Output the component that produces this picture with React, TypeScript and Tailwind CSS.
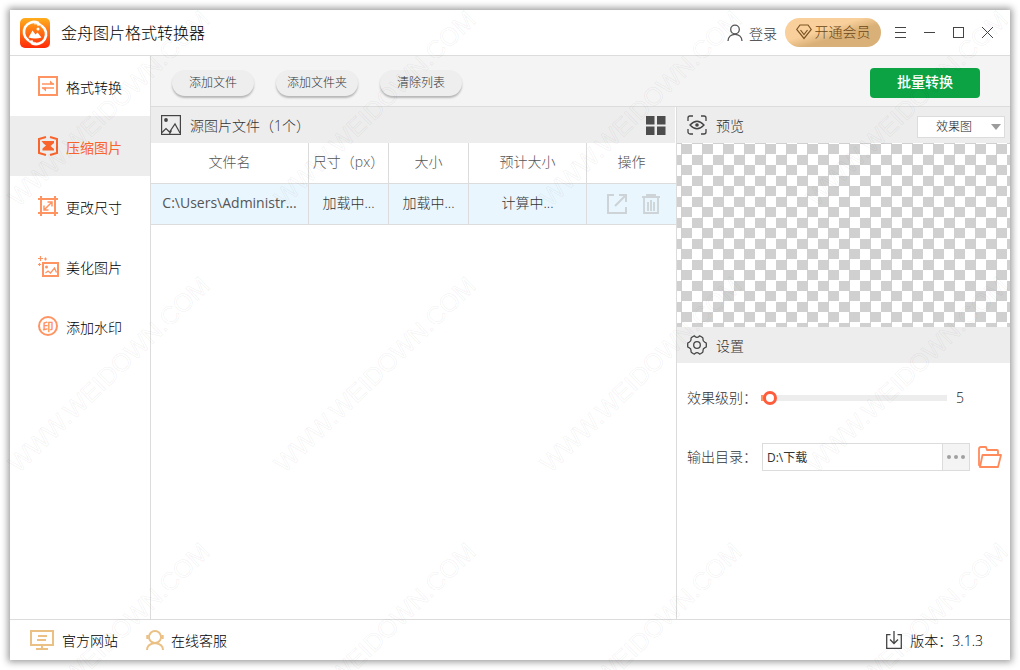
import { useState } from "react";
import type { ReactNode } from "react";

const navItems = [
  { id: "convert", label: "格式转换" },
  { id: "compress", label: "压缩图片" },
  { id: "resize", label: "更改尺寸" },
  { id: "beautify", label: "美化图片" },
  { id: "watermark", label: "添加水印" },
];

const columns = [
  { label: "文件名", width: "w-[158px]" },
  { label: "尺寸（px）", width: "w-20" },
  { label: "大小", width: "w-20" },
  { label: "预计大小", width: "w-[118px]" },
  { label: "操作", width: "w-auto" },
];

const files = [{ name: "C:\\Users\\Administr...", dimensions: "加载中...", size: "加载中...", estimate: "计算中..." }];

function NavIcon({ id }: { id: string }) {
  if (id === "watermark") {
    return (
      <span className="flex h-5 w-5 items-center justify-center rounded-full border-2 border-[#ff9463] text-[11px] leading-none font-bold text-[#ff9463]">
        印
      </span>
    );
  }
  return (
    <svg className="h-5 w-5 overflow-visible" viewBox="0 0 20 20" fill="none" stroke="#ff9463" strokeWidth="2">
      {id === "convert" && (
        <>
          <rect x="1" y="1" width="18" height="18" />
          <path d="M4 8h12M4 12h12" strokeWidth="1.400" />
          <path d="M12 4.500l4.500 4h-4.500zM8 15.500v-4H3.500z" fill="#ff9463" stroke="none" />
        </>
      )}
      {id === "compress" && (
        <g stroke="#f8642b">
          <path d="M8 1L1 3v14l7 2M12 1l7 2v14l-7 2" />
          <path d="M3.500 5H16v2l-3.500 3 3.500 3v1.500H4.500V12.500L8 9.500 5.500 7.500z" fill="#f8642b" stroke="none" />
        </g>
      )}
      {id === "resize" && (
        <>
          <path d="M0 3h20M0 17h20M3 0v20M17 0v20" />
          <path d="M6.500 13.500l7-7M9.500 6H14v4.500M6 9.500V14h4.500" strokeWidth="1.500" />
        </>
      )}
      {id === "beautify" && (
        <>
          <rect x="5" y="7" width="15" height="13" />
          <path d="M7.500 17l2.500-2 2.500 2 4-5 2 4.500" strokeWidth="1.300" />
          <circle cx="8.500" cy="11" r="1.500" fill="#ff9463" stroke="none" />
          <path d="M2.500 0v5M0 2.500h5M7.500 1.500v3M6 3h3M1.500 7v3M0 8.500h3" strokeWidth="1.200" />
        </>
      )}
    </svg>
  );
}

function WindowButton({ label, children }: { label: string; children: ReactNode }) {
  return (
    <button aria-label={label} className="flex h-7 w-[29px] items-center justify-center">
      <svg className="h-[13px] w-[13px]" viewBox="0 0 13 13" fill="none" stroke="#444">
        {children}
      </svg>
    </button>
  );
}

function TitleBar() {
  return (
    <header className="flex h-[46px] shrink-0 items-center border-b border-[#dcdcdc] pr-2 pl-2.5">
      <svg className="h-[30px] w-[30px]" viewBox="0 0 30 30">
        <defs>
          <linearGradient id="logo" x1="0" y1="0" x2="0" y2="1">
            <stop offset="0" stopColor="#ffae1c" />
            <stop offset="1" stopColor="#ff2a08" />
          </linearGradient>
        </defs>
        <rect width="30" height="30" rx="5" fill="url(#logo)" />
        <path d="M8 22A10 10 0 0 1 18 4.800M22 8A10 10 0 0 1 12 25.200" fill="none" stroke="#fff" strokeWidth="2.600" strokeLinecap="round" />
        <path d="M22 8A10 10 0 0 0 14 5.500M8 22a10 10 0 0 0 8 3" fill="none" stroke="#fff" strokeWidth="2" opacity=".6" />
        <path d="M16.500 3.200l5.500 3.300-4.500 1.500zM13.500 27l-5.500-3.500 4.500-1.500z" fill="#fff" />
        <path d="M8.500 19.500l4-7 3 4 2-2 4 5q-6.500 2-13 0z" fill="#fff" />
        <circle cx="18" cy="11" r="1.500" fill="#fff" />
      </svg>
      <h1 className="ml-[11px] text-base font-light text-black">金舟图片格式转换器</h1>
      <button className="ml-auto flex items-center gap-1.5 text-sm text-[#333]">
        <svg className="h-[18px] w-4" viewBox="0 0 16 18" fill="none" stroke="#555" strokeWidth="1.300">
          <circle cx="8" cy="5.500" r="4.300" />
          <path d="M1 17c0-4 3-6.700 7-6.700s7 2.700 7 6.700" />
        </svg>
        <span className="pt-0.5">登录</span>
      </button>
      <button className="mr-[5px] ml-2 flex h-[29px] w-24 items-center justify-center gap-[3px] rounded-full bg-linear-to-br from-[#f9d09b] from-40% to-[#d9b077] to-60% pb-0.5 text-sm text-[#6b4615]">
        <svg className="h-4 w-4" viewBox="0 0 16 16" fill="none" stroke="#7a5423" strokeWidth="1.200">
          <path d="M4 1h8l3.300 4.500L8 14.500.7 5.500z" />
          <path d="M4.500 6L8 10.500 11.500 6" />
        </svg>
        开通会员
      </button>
      <WindowButton label="菜单">
        <path d="M1 1.500h11M1 6.500h11M1 11.500h11" />
      </WindowButton>
      <WindowButton label="最小化">
        <path d="M1 6.500h11" />
      </WindowButton>
      <WindowButton label="最大化">
        <rect x="1.500" y="1.500" width="10" height="10" />
      </WindowButton>
      <WindowButton label="关闭">
        <path d="M1 1l11 11M12 1L1 12" />
      </WindowButton>
    </header>
  );
}

function PanelHeader({ icon, title, children }: { icon: ReactNode; title: string; children?: ReactNode }) {
  return (
    <div className="flex h-9 items-center bg-[#ededed] pr-[5px] pl-2.5">
      {icon}
      <h2 className="ml-[9px] pt-0.5 text-sm text-[#333]">{title}</h2>
      <div className="ml-auto">{children}</div>
    </div>
  );
}

function FilePanel() {
  return (
    <section className="min-w-0 flex-1">
      <div className="mr-px">
        <PanelHeader
          title="源图片文件（1个）"
          icon={
            <svg className="h-5 w-5" viewBox="0 0 20 20" fill="none" stroke="#444" strokeWidth="1.200">
              <rect x="0.600" y="0.600" width="18.800" height="18.800" />
              <circle cx="5" cy="5" r="1.900" fill="#444" stroke="none" />
              <path d="M1 17.500l4-4 3.500 3.500L14 9l5 9M8.500 19l2-3.500" />
            </svg>
          }
        >
          <button aria-label="缩略图视图" className="mr-1 block">
            <svg className="h-5 w-5" viewBox="0 0 20 20" fill="#4d4d4d">
              <path d="M0 1h8.500v8.500H0zM11 1h8.500v8.500H11zM0 11.500h8.500V20H0zM11 11.500h8.500V20H11z" />
            </svg>
          </button>
        </PanelHeader>
      </div>
      <table className="w-full table-fixed border-separate border-spacing-0 text-center text-sm">
        <thead>
          <tr>
            {columns.map((col) => (
              <th
                key={col.label}
                className={`${col.width} h-[41px] border-r border-b border-[#dcdcdc] p-0 pb-0.5 font-light whitespace-nowrap text-[#555] last:border-r-0`}
              >
                {col.label}
              </th>
            ))}
          </tr>
        </thead>
        <tbody className="text-[#333]">
          {files.map((file) => (
            <tr key={file.name} className="bg-[#e9f6fe]">
              <td className="h-[41px] border-r border-b border-[#dcdcdc] p-0 pb-0.5 font-normal whitespace-nowrap text-[#555]">{file.name}</td>
              <td className="border-r border-b border-[#dcdcdc] p-0 pb-0.5">{file.dimensions}</td>
              <td className="border-r border-b border-[#dcdcdc] p-0 pb-0.5">{file.size}</td>
              <td className="border-r border-b border-[#dcdcdc] p-0 pb-0.5">{file.estimate}</td>
              <td className="border-b border-[#dcdcdc] p-0">
                <div className="flex items-center justify-center gap-[15px] pl-1">
                  <button aria-label="打开文件">
                    <svg className="block h-5 w-5" viewBox="0 0 20 20" fill="none" stroke="#cdd3d6" strokeWidth="2">
                      <path d="M7 1H1v18h18v-6M8 12L18 2M12 1h7v7" />
                    </svg>
                  </button>
                  <button aria-label="删除">
                    <svg className="block h-5 w-[18px]" viewBox="0 0 18 20" fill="none" stroke="#cdd3d6" strokeWidth="1.800">
                      <path d="M0 3h18M5 3V1h8v2M2 3v16h14V3M6 8v9M9 6v11M12 8v9" />
                    </svg>
                  </button>
                </div>
              </td>
            </tr>
          ))}
        </tbody>
      </table>
    </section>
  );
}

function SidePanel() {
  const [level, setLevel] = useState(5);
  const [mode, setMode] = useState("效果图");
  const [dir, setDir] = useState("D:\\下载");
  const min = 4;
  const max = 100;
  const filled = ((level - min) / (max - min)) * 100;

  return (
    <section className="w-[334px] shrink-0 border-l border-[#dcdcdc]">
      <PanelHeader
        title="预览"
        icon={
          <svg className="h-5 w-5" viewBox="0 0 20 20" fill="none" stroke="#444" strokeWidth="1.300">
            <path d="M6 1H3a2 2 0 0 0-2 2v3M14 1h3a2 2 0 0 1 2 2v3M6 19H3a2 2 0 0 1-2-2v-3M14 19h3a2 2 0 0 0 2-2v-3" />
            <path d="M3 10Q10 2.500 17 10 10 17.500 3 10z" />
            <circle cx="10" cy="10" r="1.800" fill="#444" stroke="none" />
          </svg>
        }
      >
        <div className="relative mt-1">
          <select
            aria-label="预览模式"
            value={mode}
            onChange={(e) => setMode(e.target.value)}
            className="block h-[22px] w-[88px] appearance-none border border-[#dcdcdc] bg-white pl-[18px] text-xs text-[#222]"
          >
            <option>效果图</option>
            <option>原图</option>
          </select>
          <svg className="pointer-events-none absolute top-2 right-1 h-1.5 w-2.5" viewBox="0 0 10 6" fill="#9c9c9c">
            <path d="M0 0h10L5 6z" />
          </svg>
        </div>
      </PanelHeader>
      <div className="h-[184px] bg-[conic-gradient(#d0d0d0_25%,#fff_0_50%,#d0d0d0_0_75%,#fff_0)] bg-size-[21px_21px] bg-position-[-6px_1px]" />
      <PanelHeader
        title="设置"
        icon={
          <svg className="h-5 w-5" viewBox="0 0 20 20" fill="none" stroke="#444" strokeWidth="1.300" strokeLinejoin="round">
            <path d="M6.500 1.200Q7.500.6 8 1.600q2 1.600 4 0 .5-1 1.500-.4l2 1.300q.8.500.4 1.500-.1 2.500 2.100 3.400 1.300.1 1.300 1.100v3q0 1-1.300 1.100-2.200.9-2.100 3.400.4 1-.4 1.500l-2 1.300q-1 .6-1.500-.4-2-1.600-4 0-.5 1-1.500.4l-2-1.300q-.8-.5-.4-1.500.1-2.500-2.100-3.400Q.7 12.500.7 11.500v-3q0-1 1.300-1.100 2.200-.9 2.100-3.400-.4-1 .4-1.500z" />
            <circle cx="10" cy="10" r="3.300" />
          </svg>
        }
      />
      <div className="pr-2 pl-2.5">
        <div className="mt-[21px] flex h-7 items-center">
          <label htmlFor="level" className="w-[74px] text-sm whitespace-nowrap text-[#333]">
            效果级别：
          </label>
          <input
            id="level"
            type="range"
            min={min}
            max={max}
            value={level}
            onChange={(e) => setLevel(Number(e.target.value))}
            className="h-1.5 w-[186px] appearance-none [&::-webkit-slider-thumb]:h-3.5 [&::-webkit-slider-thumb]:w-3.5 [&::-webkit-slider-thumb]:appearance-none [&::-webkit-slider-thumb]:rounded-full [&::-webkit-slider-thumb]:border-3 [&::-webkit-slider-thumb]:border-[#ff5c3c] [&::-webkit-slider-thumb]:bg-white"
            style={{ background: `linear-gradient(to right, #ff9463 calc(${filled}% + 4px), #ededed 0)` }}
          />
          <output htmlFor="level" className="ml-[9px] text-sm text-[#222]">
            {level}
          </output>
        </div>
        <div className="mt-[31px] flex h-7 items-center">
          <label htmlFor="dir" className="w-[75px] text-sm whitespace-nowrap text-[#333]">
            输出目录：
          </label>
          <input
            id="dir"
            value={dir}
            onChange={(e) => setDir(e.target.value)}
            className="h-7 w-[180px] border border-r-0 border-[#dcdcdc] px-1 text-xs font-normal text-[#333]"
          />
          <button aria-label="浏览" className="flex h-7 w-7 items-center justify-center gap-[3px] border border-[#dcdcdc] bg-[#f4f4f4]">
            <span className="h-1 w-1 rounded-full bg-[#a0a0a0]" />
            <span className="h-1 w-1 rounded-full bg-[#a0a0a0]" />
            <span className="h-1 w-1 rounded-full bg-[#a0a0a0]" />
          </button>
          <button aria-label="打开目录" className="ml-2">
            <svg className="block h-[22px] w-6" viewBox="0 0 24 22" fill="none" stroke="#ff8a5c" strokeWidth="1.800" strokeLinejoin="round">
              <path d="M2 20.500L1 19V3q0-2 2-2h5l1 3h10q1 0 1 1v4" />
              <path d="M4.500 9H23l-3 12H2z" />
            </svg>
          </button>
        </div>
      </div>
    </section>
  );
}

function Footer() {
  return (
    <footer className="flex h-[41px] shrink-0 items-center border-t border-[#dcdcdc] pr-[27px] pl-5 text-sm text-black">
      <a href="#site" className="flex items-center gap-2">
        <svg className="h-5 w-6" viewBox="0 0 24 20" fill="none" stroke="#ebc084" strokeWidth="2">
          <path d="M1 1h22v14H1zM12 15v4M6 19h12M8 6h9M7 10h9" />
        </svg>
        <span className="pt-0.5">官方网站</span>
      </a>
      <a href="#support" className="ml-7 flex items-center gap-[7px]">
        <svg className="h-5 w-[18px]" viewBox="0 0 18 20" fill="none" stroke="#ebc084" strokeWidth="1.900">
          <circle cx="9" cy="7" r="6" />
          <path d="M1 20q0-6 8-7 8 1 8 7" />
          <path d="M1.500 5v4M16.500 5v4" strokeWidth="2.400" />
        </svg>
        <span className="pt-0.5">在线客服</span>
      </a>
      <div className="ml-auto flex items-center gap-2">
        <svg className="h-[18px] w-4" viewBox="0 0 16 18" fill="none" stroke="#444" strokeWidth="1.300">
          <path d="M4.500 3.600H.7v13.700h14.600V3.600h-3.800M8 0v12.500M4 8.500l4 4 4-4" />
        </svg>
        <span className="pt-0.5">版本：3.1.3</span>
      </div>
    </footer>
  );
}

function Watermark() {
  return (
    <div aria-hidden="true" className="pointer-events-none absolute inset-0 overflow-hidden">
      <div className="-mt-[25px] -ml-6 grid w-max grid-cols-[repeat(4,266px)] auto-rows-[266px]">
        {Array.from({ length: 12 }, (_, i) => (
          <span key={i} className="flex items-center justify-center">
            <span className="-rotate-[44deg] font-[Liberation_Sans] text-[25px] leading-none text-transparent [-webkit-text-stroke:1px_rgba(0,0,0,0.05)]">
              WWW.WEIDOWN.COM
            </span>
          </span>
        ))}
      </div>
    </div>
  );
}

export default function App() {
  const [active, setActive] = useState("compress");

  return (
    <div className="relative flex min-h-screen bg-white p-2.5 font-['Open_Sans','Noto_Sans_CJK_SC',sans-serif] font-light">
      <div className="flex min-w-0 flex-1 flex-col bg-white shadow-[0_0_7px_2px_rgba(0,0,0,0.4)]">
        <TitleBar />
        <div className="flex flex-1">
          <nav className="w-[141px] shrink-0 border-r border-[#dcdcdc]">
            {navItems.map((item) => (
              <button
                key={item.id}
                onClick={() => setActive(item.id)}
                className={`flex h-[60px] w-full items-center gap-2 pl-7 text-sm ${active === item.id ? "bg-[#ededed] font-normal text-[#f8642b]" : "text-black"}`}
              >
                <NavIcon id={item.id} />
                <span className="pt-[3px]">{item.label}</span>
              </button>
            ))}
          </nav>
          <main className="flex min-w-0 flex-1 flex-col">
            <div className="flex h-[51px] items-center gap-[22px] border-b border-[#dcdcdc] bg-[#f4f4f4] pt-[3px] pr-[30px] pl-[21px]">
              {["添加文件", "添加文件夹", "清除列表"].map((label) => (
                <button key={label} className="h-[26px] w-[82px] rounded-full bg-[#eee] text-xs text-[#333] shadow-[0_2px_2px_rgba(0,0,0,0.25)]">
                  {label}
                </button>
              ))}
              <button className="ml-auto h-[30px] w-[110px] rounded bg-[#0ba344] pb-0.5 text-sm font-medium text-white">批量转换</button>
            </div>
            <div className="flex flex-1">
              <FilePanel />
              <SidePanel />
            </div>
          </main>
        </div>
        <Footer />
      </div>
      <Watermark />
    </div>
  );
}
